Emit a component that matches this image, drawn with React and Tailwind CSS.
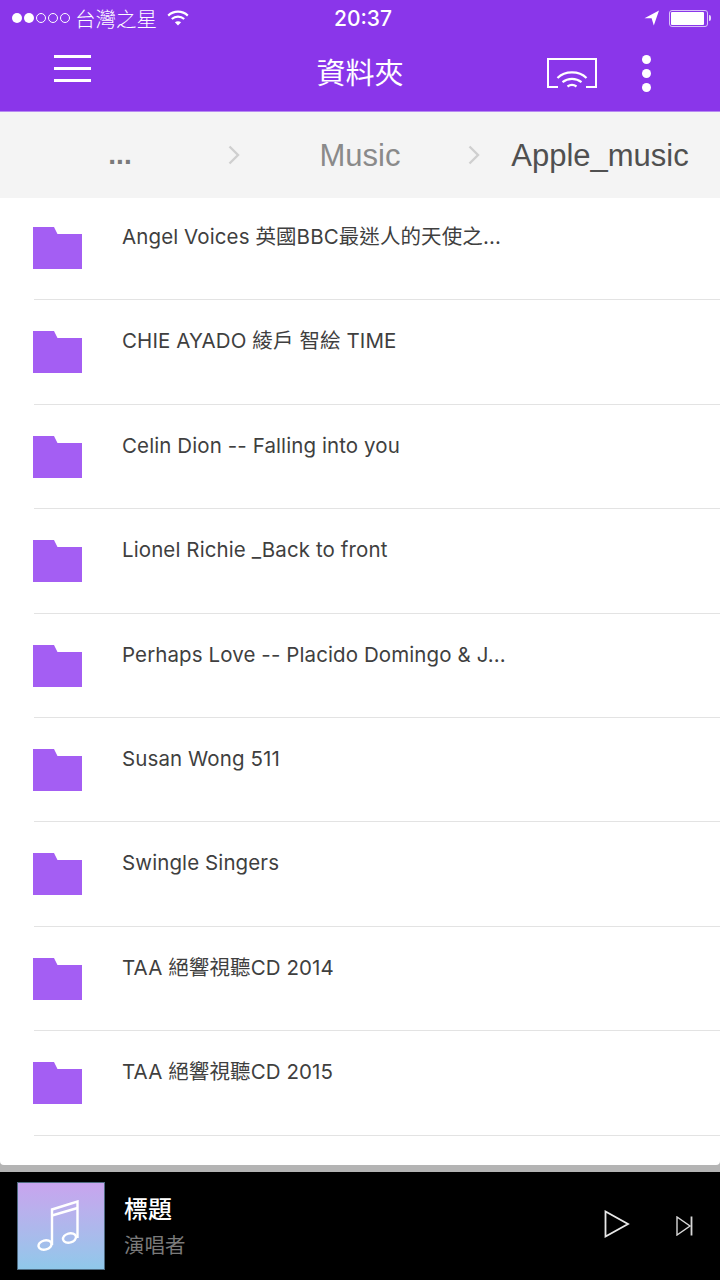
import React from "react";

const SANS = "font-['Inter','Noto_Sans_CJK_TC',sans-serif]";

const folders = [
  "Angel Voices 英國BBC最迷人的天使之...",
  "CHIE AYADO 綾戶 智絵 TIME",
  "Celin Dion -- Falling into you",
  "Lionel Richie _Back to front",
  "Perhaps Love -- Placido Domingo & J...",
  "Susan Wong 511",
  "Swingle Singers",
  "TAA 絕響視聽CD 2014",
  "TAA 絕響視聽CD 2015",
];

function FolderIcon() {
  return (
    <svg width="49" height="42" viewBox="0 0 49 42" className="shrink-0">
      <path d="M0 0H21L24.5 7H49V42H0Z" fill="#a45ef3" />
    </svg>
  );
}

function Chevron() {
  return (
    <svg width="12" height="20" viewBox="0 0 12 20" className="justify-self-end" fill="none">
      <path d="M1.5 1.5L10 10L1.5 18.5" stroke="#cfcfcf" strokeWidth="2.4" />
    </svg>
  );
}

function StatusBar() {
  return (
    <div className="h-[36px] grid grid-cols-[1fr_auto_1fr] items-center text-white">
      <div className="flex items-center pl-[12px]">
        <div className="flex items-center gap-[2px]">
          <span className="w-[10px] h-[10px] rounded-full bg-white" />
          <span className="w-[10px] h-[10px] rounded-full bg-white" />
          <span className="w-[10px] h-[10px] rounded-full border border-white" />
          <span className="w-[10px] h-[10px] rounded-full border border-white" />
          <span className="w-[10px] h-[10px] rounded-full border border-white" />
        </div>
        <span className="ml-[5px] text-[20.5px] leading-none font-['Noto_Sans_CJK_TC',sans-serif] font-light">台灣之星</span>
        <svg width="22" height="16" viewBox="0 0 22 16" className="ml-[10px]" fill="none" stroke="white" strokeWidth="2.2">
          <path d="M1.2 5.6C6.8 0.4 15.2 0.4 20.8 5.6" />
          <path d="M4.8 9C8.4 5.8 13.6 5.8 17.2 9" />
          <path d="M11 15.6L7.9 12.2C9.8 10.8 12.2 10.8 14.1 12.2Z" fill="white" stroke="none" />
        </svg>
      </div>
      <span className="pl-[6px] text-[21px] leading-none font-medium font-['Inter',sans-serif]">20:37</span>
      <div className="flex items-center justify-end pr-[9px]">
        <svg width="15" height="16" viewBox="0 0 15 16">
          <path d="M15 0.5L0.5 8.2H7.6L9.8 15.5Z" fill="white" />
        </svg>
        <div className="ml-[10px] w-[39px] h-[17px] rounded-[3px] border border-[#d9c2f8] p-[1px]">
          <div className="w-[33px] h-full rounded-[1px] bg-white" />
        </div>
        <span className="w-[2px] h-[6px] rounded-r-full bg-[#e5d6fa] ml-[1px]" />
      </div>
    </div>
  );
}

function NavBar() {
  return (
    <div className="h-[75px] grid grid-cols-[1fr_auto_1fr] items-start text-white">
      <div className="pl-[54px] pt-[19px] flex flex-col gap-[9px]">
        <span className="w-[37px] h-[3px] bg-white" />
        <span className="w-[37px] h-[3px] bg-white" />
        <span className="w-[37px] h-[3px] bg-white" />
      </div>
      <span className="pt-[13px] text-[29px] leading-[44px] font-['Noto_Sans_CJK_TC',sans-serif]">資料夾</span>
      <div className="flex justify-end items-start pr-[69px]">
        <svg width="50" height="30" viewBox="0 0 50 30" className="mt-[22px]" fill="none" stroke="white">
          <path d="M11 29H1V1H49V29H39" strokeWidth="2" />
          <path d="M10.5 20C18 12.5 32 12.5 39.5 20" strokeWidth="2.2" />
          <path d="M15.5 24.2C21 19.8 29 19.8 34.5 24.2" strokeWidth="2.2" />
          <path d="M20.5 28.5C23.2 26.6 26.8 26.6 29.5 28.5" strokeWidth="2.2" />
        </svg>
        <div className="ml-[45px] mt-[19px] flex flex-col gap-[5px]">
          <span className="w-[9px] h-[9px] rounded-full bg-white" />
          <span className="w-[9px] h-[9px] rounded-full bg-white" />
          <span className="w-[9px] h-[9px] rounded-full bg-white" />
        </div>
      </div>
    </div>
  );
}

function Breadcrumbs() {
  return (
    <div className="h-[87px] bg-[#f4f4f4] border-t border-[#b78af2] grid grid-cols-3 items-center font-['Liberation_Sans',sans-serif] text-[31px] leading-none">
      <div className="grid grid-cols-[1fr_auto_1fr] items-center">
        <span />
        <span className="text-[#7a7a7a] text-[28px] font-bold">...</span>
        <Chevron />
      </div>
      <div className="grid grid-cols-[1fr_auto_1fr] items-center">
        <span />
        <span className="text-[#8a8a8a]">Music</span>
        <Chevron />
      </div>
      <div className="flex justify-center">
        <span className="text-[#505050]">Apple_music</span>
      </div>
    </div>
  );
}

function FolderRow({ name, first }) {
  return (
    <div className={`${first ? "h-[102.4px] pt-[29px]" : "h-[104.4px] pt-[31px]"} pl-[33px] relative`}>
      <div className="flex items-start">
        <FolderIcon />
        <span className={`ml-[40px] -mt-[6px] text-[20.5px] leading-[32px] tracking-[0.1px] text-[#3f3f3f] ${SANS}`}>{name}</span>
      </div>
      <div className="absolute left-[34px] right-0 bottom-0 h-[1px] bg-[#e3e3e3]" />
    </div>
  );
}

function Player() {
  return (
    <div className="h-[108px] bg-black flex items-center pl-[17px] border-t-0">
      <div className="w-[88px] h-[88px] border border-[#4d6a80] bg-gradient-to-b from-[#c8a4ee] to-[#8fc8ea] flex items-center justify-center">
        <svg width="42" height="52" viewBox="0 0 42 52" className="mr-[6px]" fill="none" stroke="white" strokeWidth="2.4">
          <ellipse cx="8" cy="45" rx="6.6" ry="4.6" transform="rotate(-15 8 45)" />
          <ellipse cx="32.5" cy="38" rx="6.6" ry="4.6" transform="rotate(-15 32.5 38)" />
          <path d="M15 45V9.5L40.5 1.5V38" />
          <path d="M15 15.5L40.5 8" />
        </svg>
      </div>
      <div className="ml-[19px] flex flex-col gap-[8px] font-['Noto_Sans_CJK_TC',sans-serif]">
        <span className="text-white text-[24px] leading-[28px] font-medium">標題</span>
        <span className="text-[#7a7a7a] text-[20.5px] leading-[28px]">演唱者</span>
      </div>
      <div className="ml-auto flex items-center pr-[27px]">
        <svg width="26" height="28" viewBox="0 0 26 28" className="-mt-[4px]" fill="none" stroke="#e8e8e8" strokeWidth="1.8">
          <path d="M1.5 1.5V26.5L24 14Z" />
        </svg>
        <svg width="17" height="20" viewBox="0 0 17 20" className="ml-[46px]" fill="none" stroke="#d8d8d8" strokeWidth="1.4">
          <path d="M1 1V19L14 10Z" />
          <path d="M15.5 0.5V19.5" strokeWidth="1.8" />
        </svg>
      </div>
    </div>
  );
}

export default function App() {
  return (
    <div className="w-[720px] h-[1280px] flex flex-col overflow-hidden bg-[#b4b4b4]">
      <div className="bg-[#8a36ea]">
        <StatusBar />
        <NavBar />
      </div>
      <Breadcrumbs />
      <div className="h-[967px] bg-white rounded-b-[4px] overflow-hidden">
        {folders.map((f, i) => (
          <FolderRow key={f} name={f} first={i === 0} />
        ))}
      </div>
      <div className="h-[7px] shrink-0" />
      <Player />
    </div>
  );
}
